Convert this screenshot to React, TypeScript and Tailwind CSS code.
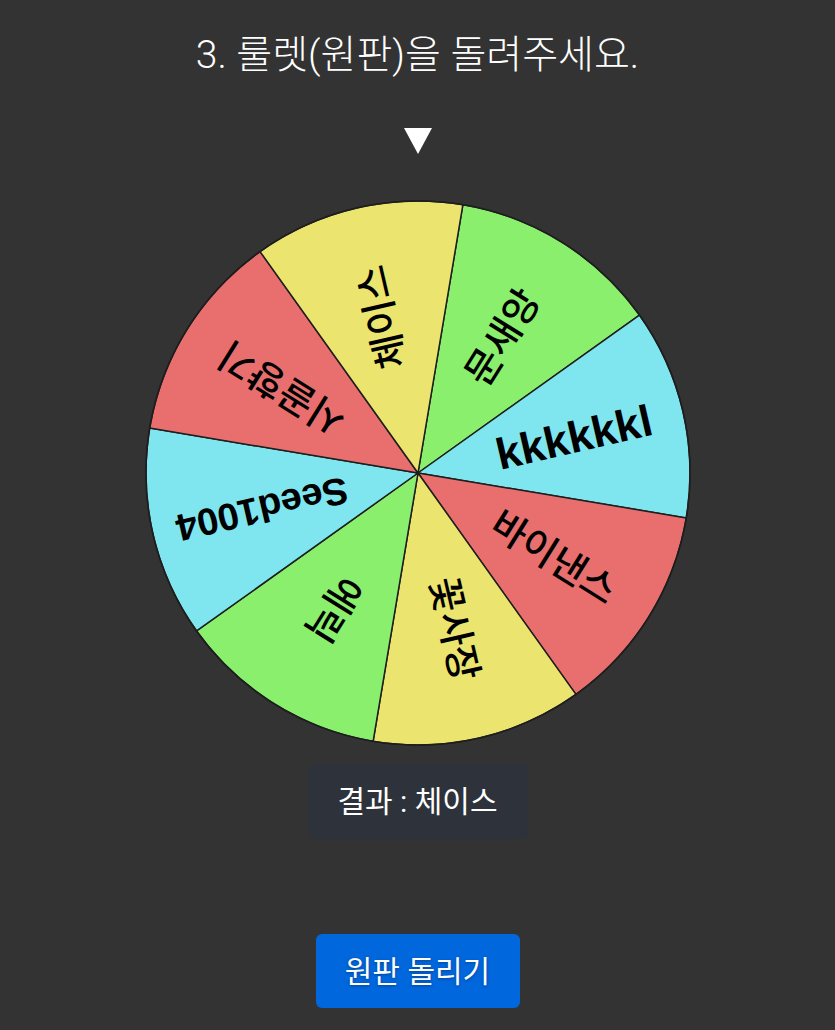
import React from "react";

const CX = 274;
const CY = 274;
const R = 272;

const segments = [
  { label: "문새앙", color: "#89ef6d", latin: false, size: 38 },
  { label: "kkkkkkl", color: "#7fe6ef", latin: true, size: 44 },
  { label: "바이낸스", color: "#e86f6e", latin: false, size: 38 },
  { label: "꽃사장", color: "#ebe46e", latin: false, size: 38 },
  { label: "에릭", color: "#89ef6d", latin: false, size: 38 },
  { label: "Seed1004", color: "#7fe6ef", latin: true, size: 38 },
  { label: "시골향기", color: "#e86f6e", latin: false, size: 38 },
  { label: "체이스", color: "#ebe46e", latin: false, size: 38 },
];

const START = 9.5;

function pt(a: number, r: number) {
  const rad = (a * Math.PI) / 180;
  return [CX + r * Math.sin(rad), CY - r * Math.cos(rad)];
}

function Wheel() {
  return (
    <svg width={548} height={548} viewBox="0 0 548 548" className="block">
      {segments.map((s, i) => {
        const a0 = START + i * 45;
        const a1 = a0 + 45;
        const [x0, y0] = pt(a0, R);
        const [x1, y1] = pt(a1, R);
        return (
          <path
            key={"p" + i}
            d={`M ${CX} ${CY} L ${x0} ${y0} A ${R} ${R} 0 0 1 ${x1} ${y1} Z`}
            fill={s.color}
            stroke="#1e1e1e"
            strokeWidth={1.5}
            strokeLinejoin="round"
          />
        );
      })}
      <circle cx={CX} cy={CY} r={R} fill="none" stroke="#1e1e1e" strokeWidth={1.5} />
      {segments.map((s, i) => {
        const mid = START + i * 45 + 22.5;
        return (
          <text
            key={"t" + i}
            x={CX}
            y={CY}
            transform={`rotate(${mid - 90} ${CX} ${CY}) translate(160 0)`}
            textAnchor="middle"
            dominantBaseline="central"
            fill="#000"
            fontSize={s.size}
            fontWeight={s.latin ? 700 : 500}
            fontFamily="'Liberation Sans', 'Noto Sans CJK KR', sans-serif"
          >
            {s.label}
          </text>
        );
      })}
    </svg>
  );
}

export default function App() {
  return (
    <div className="min-h-[1030px] w-full bg-[#333333] flex flex-col items-center font-[family-name:Roboto,'Noto_Sans_CJK_KR',sans-serif]">
      <h1 className="pt-[28px] text-[39px] leading-[54px] font-light text-white">
        3. 룰렛(원판)을 돌려주세요.
      </h1>
      <svg width={28} height={26} viewBox="0 0 28 26" className="mt-[46px] block">
        <polygon points="0,0 28,0 14,26" fill="#ffffff" />
      </svg>
      <div className="mt-[45px]">
        <Wheel />
      </div>
      <div className="mt-[17px] w-[220px] h-[75px] rounded-[6px] bg-[#2e333b] flex items-center justify-center text-white text-[30px]">
        결과 : 체이스
      </div>
      <button className="mt-[95px] w-[204px] h-[74px] rounded-[6px] bg-[#0167dd] text-white text-[30px] flex items-center justify-center [text-shadow:0_1px_3px_rgba(0,0,0,0.35)]">
        원판 돌리기
      </button>
    </div>
  );
}
